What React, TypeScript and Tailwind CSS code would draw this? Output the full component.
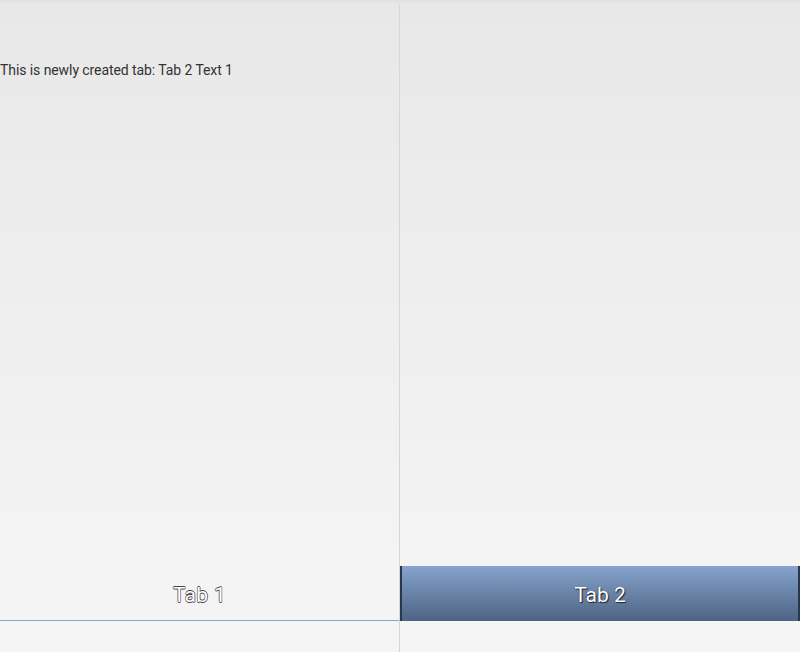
import React from 'react';

const outline = {
  textShadow: '0.6px 0 0 #444, -0.6px 0 0 #444, 0 0.6px 0 #444, 0 -0.6px 0 #444',
};

export default function App() {
  return (
    <div className="flex h-[652px] w-[800px] flex-col overflow-hidden bg-[#f4f4f4] font-['Roboto',sans-serif]">
      {/* top strip */}
      <div className="h-[4px] bg-gradient-to-b from-[#e2e2e2] to-[#e8e8e8]" />
      <div className="flex flex-1">
        {/* left pane */}
        <div className="flex w-[399px] flex-col">
          <div className="flex-1 bg-gradient-to-b from-[#e8e8e8] to-[#f4f4f4]">
            <p className="mt-[58px] text-[14px] leading-[16px] tracking-[-0.08px] text-[#333]">This is newly created tab: Tab 2 Text 1</p>
          </div>
          <div className="flex h-[55px] items-center justify-center border-b border-[#8aa8c8] bg-[#f4f4f4] pt-[5px]">
            <span className="text-[21px] tracking-[0.3px] text-white" style={outline}>Tab 1</span>
          </div>
          <div className="h-[31px] bg-[#f5f5f5]" />
        </div>
        <div className="w-px bg-[#d6d6d6]" />
        {/* right pane */}
        <div className="flex flex-1 flex-col">
          <div className="flex-1 bg-gradient-to-b from-[#e8e8e8] to-[#f4f4f4]" />
          <div className="flex h-[55px] items-center justify-center border-x-2 border-[#28374b] bg-gradient-to-b from-[#86a4cd] to-[#4e6483] pt-[5px]">
            <span className="text-[21px] text-white" style={{ textShadow: '1px 1px 1px #1a2330, -0.5px 0 0 #2a3345' }}>Tab 2</span>
          </div>
          <div className="h-[31px] bg-[#f5f5f5]" />
        </div>
      </div>
    </div>
  );
}
